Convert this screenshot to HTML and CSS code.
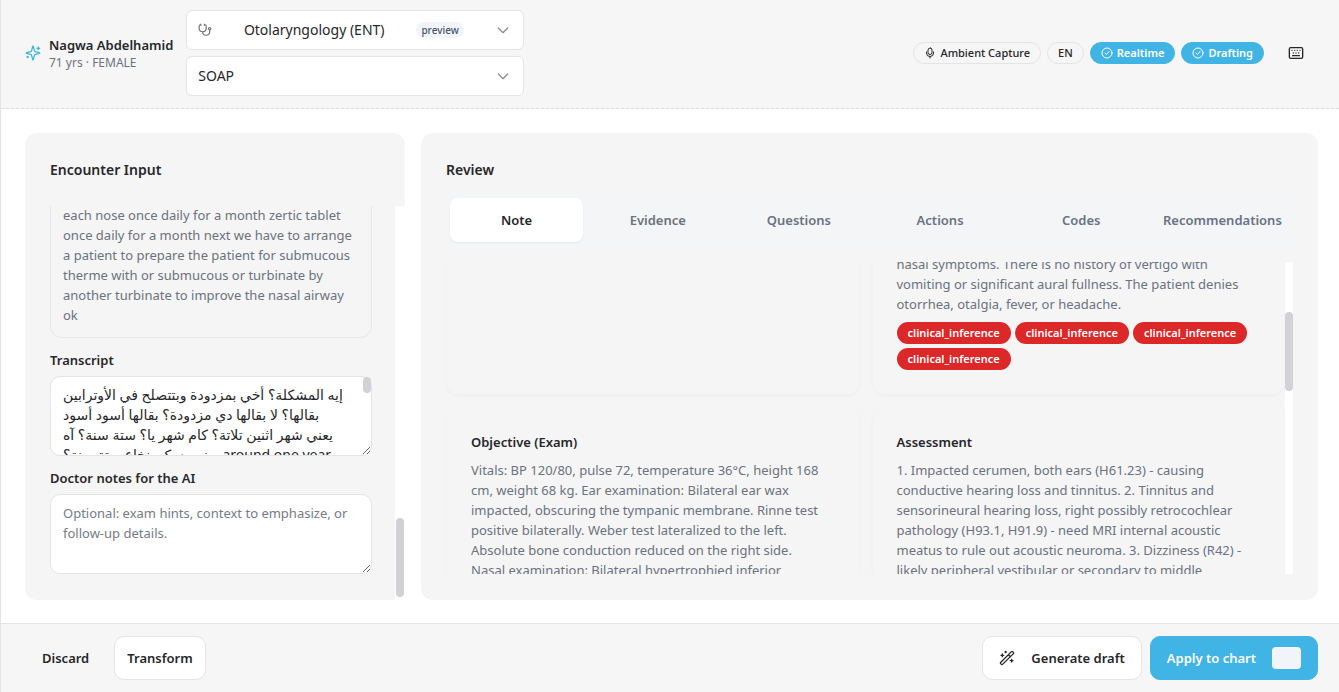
FILE: index.html
```html
<!DOCTYPE html>
<html lang="en">
<head>
  <meta charset="UTF-8">
  <meta name="viewport" content="width=device-width, initial-scale=1.0">
  <title>Encounter - Nagwa Abdelhamid</title>
  <link rel="stylesheet" href="styles.css">
</head>
<body>

  <!-- Header -->
  <header class="topbar">
    <svg class="icon icon-sparkles" viewBox="0 0 24 24"><path d="M9.9 15.5A2 2 0 0 0 8.5 14.1l-6.1-1.6a.5.5 0 0 1 0-1l6.1-1.6A2 2 0 0 0 9.9 8.5l1.6-6.1a.5.5 0 0 1 1 0l1.6 6.1a2 2 0 0 0 1.4 1.4l6.1 1.6a.5.5 0 0 1 0 1l-6.1 1.6a2 2 0 0 0-1.4 1.4l-1.6 6.1a.5.5 0 0 1-1 0z"/><path d="M20 3v4M22 5h-4M4 17v2M5 18H3"/></svg>
    <div class="patient">
      <div class="patient-name">Nagwa Abdelhamid</div>
      <div class="patient-info">71 yrs · FEMALE</div>
    </div>
    <div class="pickers">
      <div class="picker">
        <svg class="icon icon-muted" viewBox="0 0 24 24"><path d="M11 2v2M5 2v2M5 3H4a2 2 0 0 0-2 2v4a6 6 0 0 0 12 0V5a2 2 0 0 0-2-2h-1"/><path d="M8 15a6 6 0 0 0 12 0v-3"/><circle cx="20" cy="10" r="2"/></svg>
        <select aria-label="Specialty">
          <option>Otolaryngology (ENT)</option>
        </select>
        <span class="tag">preview</span>
        <svg class="icon icon-chevron" viewBox="0 0 24 24"><path d="m5 9 7 7 7-7"/></svg>
      </div>
      <div class="picker">
        <select aria-label="Note template">
          <option>SOAP</option>
        </select>
        <svg class="icon icon-chevron" viewBox="0 0 24 24"><path d="m5 9 7 7 7-7"/></svg>
      </div>
    </div>
    <div class="status">
      <button class="pill">
        <svg class="icon" viewBox="0 0 24 24"><rect x="8" y="2" width="8" height="13" rx="4"/><path d="M19 10v2a7 7 0 0 1-14 0v-2M12 19v3"/></svg>
        Ambient Capture
      </button>
      <button class="pill">EN</button>
      <button class="pill pill-on">
        <svg class="icon" viewBox="0 0 24 24"><circle cx="12" cy="12" r="10"/><path d="m8 12 3 3 5-6"/></svg>
        Realtime
      </button>
      <button class="pill pill-on">
        <svg class="icon" viewBox="0 0 24 24"><circle cx="12" cy="12" r="10"/><path d="m8 12 3 3 5-6"/></svg>
        Drafting
      </button>
      <button class="icon-btn" aria-label="Keyboard shortcuts">
        <svg class="icon" viewBox="0 0 24 24"><rect x="2" y="4" width="20" height="16" rx="2"/><path d="M6 8h.01M10 8h.01M14 8h.01M18 8h.01M8 12h.01M12 12h.01M16 12h.01M7 16h10"/></svg>
      </button>
    </div>
  </header>

  <main class="content">
    <!-- Encounter input -->
    <section class="card card-input">
      <h2>Encounter Input</h2>
      <div class="scroll-area">
        <div class="scroll-view">
          <div class="summary">each nose once daily for a month zertic tablet once daily for a month next we have to arrange a patient to prepare the patient for submucous therme with or submucous or turbinate by another turbinate to improve the nasal airway ok</div>
          <div class="field">
            <label for="transcript">Transcript</label>
            <div class="textarea-wrap">
              <textarea id="transcript" class="transcript">إيه المشكلة؟ أخي بمزدودة وبتتصلح في الأوترابين
بقالها؟ لا بقالها دي مزدودة؟ بقالها أسود أسود
يعني شهر اثنين تلاتة؟ كام شهر يا؟ ستة سنة؟ آه
يعني يسكن نخاع ستة سنة؟ around one year</textarea>
              <span class="textarea-thumb"></span>
            </div>
          </div>
          <div class="field">
            <label for="notes">Doctor notes for the AI</label>
            <textarea id="notes" placeholder="Optional: exam hints, context to emphasize, or follow-up details."></textarea>
          </div>
        </div>
        <div class="track track-input"><span class="thumb"></span></div>
      </div>
    </section>

    <!-- Review -->
    <section class="card card-review">
      <h2>Review</h2>
      <div class="tabs" role="tablist">
        <button class="tab active" role="tab" aria-selected="true">Note</button>
        <button class="tab" role="tab">Evidence</button>
        <button class="tab" role="tab">Questions</button>
        <button class="tab" role="tab">Actions</button>
        <button class="tab" role="tab">Codes</button>
        <button class="tab" role="tab">Recommendations</button>
      </div>
      <div class="scroll-area">
        <div class="scroll-view">
          <div class="notes">
            <article class="note"></article>
            <article class="note">
              <p>nasal symptoms. There is no history of vertigo with vomiting or significant aural fullness. The patient denies otorrhea, otalgia, fever, or headache.</p>
              <div class="flags">
                <span class="flag">clinical_inference</span>
                <span class="flag">clinical_inference</span>
                <span class="flag">clinical_inference</span>
                <span class="flag">clinical_inference</span>
              </div>
            </article>
            <article class="note">
              <h3>Objective (Exam)</h3>
              <p>Vitals: BP 120/80, pulse 72, temperature 36°C, height 168 cm, weight 68 kg. Ear examination: Bilateral ear wax impacted, obscuring the tympanic membrane. Rinne test positive bilaterally. Weber test lateralized to the left. Absolute bone conduction reduced on the right side. Nasal examination: Bilateral hypertrophied inferior</p>
            </article>
            <article class="note">
              <h3>Assessment</h3>
              <p>1. Impacted cerumen, both ears (H61.23) - causing conductive hearing loss and tinnitus. 2. Tinnitus and sensorineural hearing loss, right possibly retrocochlear pathology (H93.1, H91.9) - need MRI internal acoustic meatus to rule out acoustic neuroma. 3. Dizziness (R42) - likely peripheral vestibular or secondary to middle</p>
            </article>
          </div>
        </div>
        <div class="track track-review"><span class="thumb"></span></div>
      </div>
    </section>
  </main>

  <!-- Actions -->
  <footer class="actions">
    <div class="btn-group">
      <button class="btn btn-ghost">Discard</button>
      <button class="btn">Transform</button>
    </div>
    <div class="btn-group">
      <button class="btn btn-generate">
        <svg class="icon" viewBox="0 0 24 24"><path d="m21.600 3.600-1.200-1.200a1.200 1.200 0 0 0-1.700 0L2.400 18.700a1.200 1.200 0 0 0 0 1.700l1.200 1.200a1.200 1.200 0 0 0 1.700 0L21.600 5.400a1.200 1.200 0 0 0 0-1.800M14 7l3 3M5 6v4M19 14v4M10 2v2M7 8H3M21 16h-4M11 3H9"/></svg>
        Generate draft
      </button>
      <button class="btn btn-primary">Apply to chart <kbd></kbd></button>
    </div>
  </footer>

</body>
</html>
```
FILE: styles.css
```css
* {
  box-sizing: border-box;
}
body {
  font-family: "Noto Sans", "DejaVu Sans", sans-serif;
  font-size: 13px;
  line-height: 20px;
  color: #27272a;
  background: #fff;
  margin: 0;
  height: 100vh;
  display: flex;
  flex-direction: column;
  border-left: 1px solid #e4e4e7;
}
button, select, textarea {
  font: inherit;
  color: inherit;
}
button {
  cursor: pointer;
}
h2, h3, p {
  margin: 0;
}
h2 {
  font-size: 14px;
  line-height: 24px;
  font-weight: 600;
}
h3 {
  font-size: 13px;
  font-weight: 600;
  margin-bottom: 8px;
}
.icon {
  width: 16px;
  height: 16px;
  flex-shrink: 0;
  fill: none;
  stroke: currentColor;
  stroke-width: 2;
  stroke-linecap: round;
  stroke-linejoin: round;
}

/* Header */
.topbar {
  display: flex;
  align-items: center;
  padding: 10px 23px 12px 24px;
  background: #f6f6f6;
  border-bottom: 1px dashed #dcdcdf;
}
.icon-sparkles {
  color: #41b4e6;
  margin-right: 8px;
}
.patient {
  margin-right: 13px;
  white-space: nowrap;
}
.patient-name {
  font-weight: 600;
}
.patient-info {
  font-size: 12px;
  line-height: 16px;
  color: #6b7280;
}
.pickers {
  display: flex;
  flex-direction: column;
  gap: 6px;
  width: 338px;
}
.picker {
  display: flex;
  align-items: center;
  justify-content: space-between;
  height: 40px;
  padding: 0 12px 0 11px;
  background: #fff;
  border: 1px solid #e4e4e7;
  border-radius: 6px;
}
.picker select {
  appearance: none;
  border: none;
  background: none;
  padding: 0;
  font-size: 14px;
}
.icon-muted {
  width: 14px;
  height: 14px;
  color: #71717a;
}
.icon-chevron {
  color: #8e8e93;
}
.tag {
  padding: 0 5px;
  background: #f1f5f9;
  border-radius: 8px;
  font-size: 10px;
  font-weight: 500;
  line-height: 16px;
  color: #475569;
}
.status {
  display: flex;
  align-items: center;
  gap: 6px;
  margin-left: auto;
}
.pill {
  display: flex;
  align-items: center;
  gap: 4px;
  height: 22px;
  padding: 0 10px;
  background: none;
  border: 1px solid #e4e4e7;
  border-radius: 11px;
  font-size: 11px;
  font-weight: 500;
  line-height: 16px;
  white-space: nowrap;
}
.pill .icon {
  width: 12px;
  height: 12px;
}
.pill-on {
  background: #41b4e6;
  border-color: #41b4e6;
  color: #fff;
  font-weight: 600;
}
.icon-btn {
  display: flex;
  align-items: center;
  justify-content: center;
  width: 40px;
  height: 40px;
  margin-left: 6px;
  padding: 0;
  background: none;
  border: none;
}

/* Cards */
.content {
  flex: 1;
  min-height: 0;
  display: flex;
  gap: 16px;
  padding: 24px 21px 23px 24px;
}
.card {
  display: flex;
  flex-direction: column;
  padding-top: 25px;
  background: #f5f5f5;
  border-radius: 12px;
}
.card-input {
  width: 380px;
  padding-left: 25px;
}
.card-input h2 {
  margin-bottom: 24px;
}
.card-review {
  flex: 1;
  min-width: 0;
  padding-left: 25px;
  padding-right: 25px;
  padding-bottom: 26px;
}
.scroll-area {
  flex: 1;
  min-height: 0;
  display: flex;
}
.scroll-view {
  flex: 1;
  min-width: 0;
  overflow: hidden;
}
.track {
  display: flex;
  flex-direction: column;
  background: #fff;
}
.thumb {
  width: 8px;
  height: 79px;
  background: #d1d1d6;
  border-radius: 4px;
}
.track-input {
  width: 10px;
  padding: 0 1px 3px;
  justify-content: flex-end;
}
.track-review {
  width: 8px;
  padding-top: 50px;
}

/* Encounter input */
.card-input .scroll-view {
  padding-right: 23px;
}
.summary {
  margin-top: -1px;
  padding: 0 12px 12px;
  border: 1px solid #e8e8ea;
  border-top: none;
  border-radius: 0 0 12px 12px;
  color: #6b7280;
}
.field {
  margin-top: 12px;
}
.field label {
  display: block;
  margin-bottom: 6px;
  font-weight: 600;
}
.textarea-wrap {
  position: relative;
}
textarea {
  display: block;
  width: 100%;
  height: 80px;
  padding: 8px 12px;
  background: #fff;
  border: 1px solid #e4e4e7;
  border-radius: 10px;
  overflow: hidden;
  resize: vertical;
}
textarea::placeholder {
  color: #757b87;
}
.transcript {
  font-size: 14px;
  white-space: pre;
}
.textarea-thumb {
  position: absolute;
  top: 1px;
  right: 1px;
  width: 8px;
  height: 16px;
  background: #d1d1d6;
  border-radius: 4px;
}

/* Review */
.tabs {
  display: grid;
  grid-template-columns: repeat(6, minmax(0, 1fr));
  gap: 8px;
  margin: 12px 0 16px;
  padding: 4px;
  background: #f3f5f7;
  border-radius: 10px;
}
.tab {
  display: flex;
  align-items: center;
  justify-content: center;
  height: 44px;
  padding: 0;
  background: none;
  border: none;
  border-radius: 8px;
  font-weight: 600;
  color: #6b7280;
}
.tab.active {
  background: #fff;
  color: #27272a;
  box-shadow: 0 1px 2px rgba(0, 0, 0, 0.06);
}
.notes {
  display: grid;
  grid-template-columns: 1fr 1fr;
  gap: 12px;
  margin-top: -33px;
}
.note {
  padding: 24px;
  border: 1px solid #f2f2f3;
  border-top-color: transparent;
  border-radius: 12px;
  box-shadow: 0 1px 2px rgba(0, 0, 0, 0.03);
  color: #6b7280;
}
.note h3 {
  color: #27272a;
}
.note p {
  padding-right: 8px;
}
.flags {
  display: flex;
  flex-wrap: wrap;
  gap: 4px;
  margin-top: 8px;
}
.flag {
  padding: 0 11px;
  background: #dc2828;
  border-radius: 11px;
  color: #fff;
  font-size: 11px;
  font-weight: 600;
  line-height: 22px;
}

/* Footer */
.actions {
  display: flex;
  align-items: center;
  justify-content: space-between;
  padding: 12px 21px 12px 24px;
  background: #f6f6f6;
  border-top: 1px solid #e4e4e7;
}
.btn-group {
  display: flex;
  gap: 8px;
}
.btn {
  display: flex;
  align-items: center;
  height: 44px;
  padding: 0 12px;
  background: #fff;
  border: 1px solid #e4e4e7;
  border-radius: 10px;
  font-weight: 600;
  white-space: nowrap;
}
.btn-ghost {
  padding: 0 16px;
  background: none;
  border-color: transparent;
}
.btn-generate {
  gap: 16px;
  padding: 0 16px;
}
.btn-primary {
  gap: 16px;
  padding: 0 16px;
  background: #41b4e6;
  border-color: #41b4e6;
  color: #fff;
}
kbd {
  width: 29px;
  height: 22px;
  background: #f1f5f9;
  border-radius: 4px;
}
```
